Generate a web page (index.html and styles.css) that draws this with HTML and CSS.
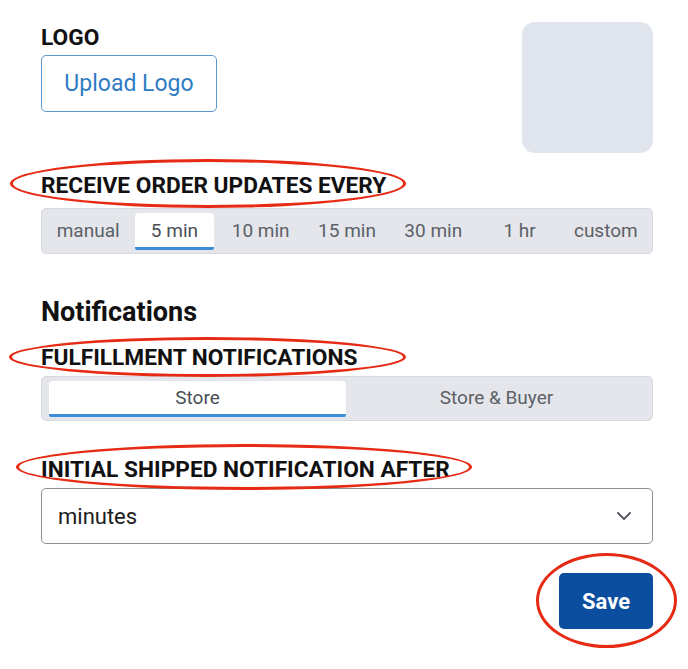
FILE: index.html
```html
<!DOCTYPE html>
<html lang="en">
<head>
    <meta charset="UTF-8" />
    <meta name="viewport" content="width=device-width, initial-scale=1" />
    <title>Store Settings</title>
    <link rel="stylesheet" href="styles.css">
</head>
<body>
<div class="page">
    <div class="logo-row">
        <div class="logo-field">
            <label class="field-label">LOGO</label>
            <button class="upload-btn">Upload Logo</button>
        </div>
        <div class="logo-preview"></div>
    </div>

    <label class="field-label updates-label">RECEIVE ORDER UPDATES EVERY</label>
    <div class="segmented seg-7">
        <button class="seg">manual</button>
        <button class="seg active">5 min</button>
        <button class="seg">10 min</button>
        <button class="seg">15 min</button>
        <button class="seg">30 min</button>
        <button class="seg">1 hr</button>
        <button class="seg">custom</button>
    </div>

    <h2 class="section-title">Notifications</h2>

    <label class="field-label fulfill-label">FULFILLMENT NOTIFICATIONS</label>
    <div class="segmented seg-2">
        <button class="seg active">Store</button>
        <button class="seg">Store &amp; Buyer</button>
    </div>

    <label class="field-label shipped-label">INITIAL SHIPPED NOTIFICATION AFTER</label>
    <div class="select">
        <span>minutes</span>
        <svg class="chevron" width="16" height="10" viewBox="0 0 16 10">
            <path d="M2 2 L8 8 L14 2" fill="none" stroke="#5b5f66" stroke-width="2" stroke-linecap="round" stroke-linejoin="round"/>
        </svg>
    </div>

    <div class="actions">
        <button class="save-btn">Save</button>
    </div>

    <!-- red review marks drawn on top of the form -->
    <div class="mark mark-updates"></div>
    <div class="mark mark-fulfill"></div>
    <div class="mark mark-shipped"></div>
    <div class="mark mark-save"></div>
</div>
</body>
</html>
```

FILE: styles.css
```css
body {
  margin: 0;
  background: #ffffff;
  font-family: Roboto, 'Liberation Sans', sans-serif;
  color: #111;
}
.page {
  position: relative;
  width: 612px;
  padding: 22px 0 40px 41px;
}
.logo-row {
  display: flex;
  justify-content: space-between;
  align-items: flex-start;
}
.logo-field {
  padding-top: 3px;
}
.field-label {
  display: block;
  font-size: 22.7px;
  line-height: 26px;
  font-weight: 700;
  color: #111;
}
.upload-btn {
  display: block;
  margin-top: 4px;
  width: 176px;
  height: 57px;
  background: #fff;
  border: 1px solid #5a96d0;
  border-radius: 5px;
  color: #2f7cc4;
  font-family: inherit;
  font-size: 23px;
}
.logo-preview {
  width: 131px;
  height: 131px;
  background: #e1e6ee;
  border-radius: 13px;
}
.updates-label {
  margin-top: 20px;
}
.segmented {
  display: grid;
  box-sizing: border-box;
  background: #e4e6eb;
  border: 1px solid #d6d9de;
  border-radius: 5px;
}
.seg-7 {
  grid-template-columns: repeat(7, 1fr);
  height: 46px;
  margin-top: 9px;
  padding: 4px 3px 3px;
}
.seg-2 {
  grid-template-columns: repeat(2, 1fr);
  height: 45px;
  margin-top: 5px;
  padding: 4px 6px 3px;
}
.seg {
  margin: 0 4px;
  background: transparent;
  border: none;
  border-bottom: 3px solid transparent;
  border-radius: 4px 4px 2px 2px;
  font-family: inherit;
  font-size: 19px;
  color: #5c6168;
}
.seg-2 .seg {
  margin: 0 1px;
}
.seg.active {
  background: #fff;
  border-bottom-color: #3a8ed8;
  color: #4a4f56;
}
.section-title {
  margin: 43px 0 0;
  font-size: 27px;
  line-height: 30px;
  font-weight: 700;
}
.fulfill-label {
  margin-top: 18px;
}
.shipped-label {
  margin-top: 36px;
}
.select {
  display: flex;
  align-items: center;
  justify-content: space-between;
  box-sizing: border-box;
  height: 56px;
  margin-top: 5px;
  padding: 0 20px 0 16px;
  border: 1px solid #8c9096;
  border-radius: 5px;
  font-size: 22px;
  color: #1c1c1c;
}
.actions {
  display: flex;
  justify-content: flex-end;
  margin-top: 29px;
}
.save-btn {
  width: 94px;
  height: 56px;
  background: #0b4e9f;
  border: none;
  border-radius: 5px;
  color: #fff;
  font-family: inherit;
  font-size: 22px;
  font-weight: 700;
}
.mark {
  position: absolute;
  box-sizing: border-box;
  border: 3px solid #e62a14;
  border-radius: 50%;
}
.mark-updates {
  left: 10px;
  top: 159px;
  width: 396px;
  height: 49px;
}
.mark-fulfill {
  left: 9px;
  top: 337px;
  width: 397px;
  height: 40px;
}
.mark-shipped {
  left: 16px;
  top: 444px;
  width: 456px;
  height: 46px;
}
.mark-save {
  left: 536px;
  top: 553px;
  width: 141px;
  height: 95px;
}
```
